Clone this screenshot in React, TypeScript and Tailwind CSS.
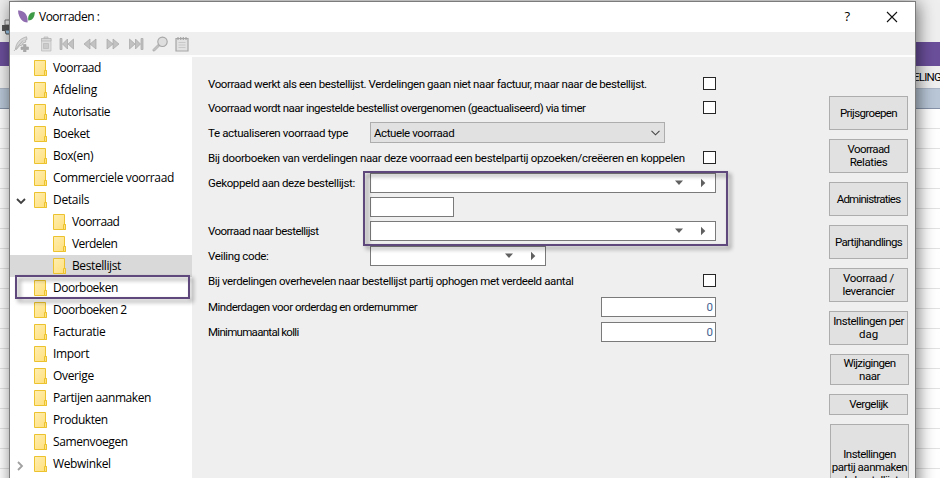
import React from "react";

const ui = "font-['Roboto','Liberation_Sans',sans-serif]";

type Node = { label: string; track: string; sub?: boolean; selected?: boolean; arrow?: "open" | "closed" };

const tree: Node[] = [
  { label: "Voorraad", track: "tracking-[-0.55px]" },
  { label: "Afdeling", track: "tracking-[-0.2px]" },
  { label: "Autorisatie", track: "tracking-[-0.32px]" },
  { label: "Boeket", track: "tracking-[-0.4px]" },
  { label: "Box(en)", track: "tracking-[-0.3px]" },
  { label: "Commerciele voorraad", track: "tracking-[-0.35px]" },
  { label: "Details", track: "tracking-[-0.3px]", arrow: "open" },
  { label: "Voorraad", track: "tracking-[-0.6px]", sub: true },
  { label: "Verdelen", track: "tracking-[-0.6px]", sub: true },
  { label: "Bestellijst", track: "tracking-[-0.4px]", sub: true, selected: true },
  { label: "Doorboeken", track: "tracking-[-0.5px]" },
  { label: "Doorboeken 2", track: "tracking-[-0.5px]" },
  { label: "Facturatie", track: "tracking-[-0.35px]" },
  { label: "Import", track: "tracking-[-0.35px]" },
  { label: "Overige", track: "tracking-[-0.35px]" },
  { label: "Partijen aanmaken", track: "tracking-[-0.43px]" },
  { label: "Produkten", track: "tracking-[-0.45px]" },
  { label: "Samenvoegen", track: "tracking-[-0.38px]" },
  { label: "Webwinkel", track: "tracking-[-0.35px]", arrow: "closed" },
];

function Folder() {
  return (
    <svg width="14" height="16" viewBox="0 0 14 16" className="shrink-0">
      <defs>
        <linearGradient id="fold" x1="0" y1="0" x2="1" y2="1">
          <stop offset="0" stopColor="#ffeeb0" />
          <stop offset="1" stopColor="#ffdf7c" />
        </linearGradient>
      </defs>
      <path d="M.5.5h11v10h1v5H.5z" fill="url(#fold)" stroke="#ecc32e" />
      <path d="M10.500 15v-4.500h2v5h-2z" fill="#ffe284" stroke="#ecc32e" />
    </svg>
  );
}

function TreeRow({ n }: { n: Node }) {
  return (
    <div className={`flex h-[22px] shrink-0 items-center ${n.selected ? "bg-[#d9d9d9]" : ""}`}>
      <span className={`flex shrink-0 items-center pl-[6px] pt-[3px] ${n.sub ? "w-[43px]" : "w-[24px]"}`}>
        {n.arrow === "open" && (
          <svg width="10" height="7" viewBox="0 0 10 7"><path d="M1 1l4 4 4-4" fill="none" stroke="#404040" strokeWidth="1.8" /></svg>
        )}
        {n.arrow === "closed" && (
          <svg width="8" height="10" viewBox="0 0 8 10"><path d="M2 1l4 4-4 4" fill="none" stroke="#a0a0a0" strokeWidth="1.800" /></svg>
        )}
      </span>
      <Folder />
      <span className={`ml-[5px] whitespace-nowrap font-['Open_Sans','Noto_Sans',sans-serif] text-[12px] leading-[22px] text-black ${n.track}`}>{n.label}</span>
    </div>
  );
}

function Tool({ children, gap }: { children: React.ReactNode; gap: string }) {
  return (
    <svg width="16" height="16" viewBox="0 0 16 16" className={`shrink-0 ${gap}`} fill="#c2c2c2" stroke="#a6a6a6" strokeWidth=".7">
      {children}
    </svg>
  );
}

function Toolbar() {
  return (
    <div className="flex h-[23px] items-center bg-[#efefef] pl-[3px]">
      <Tool gap="">
        <path d="M2.500 13C3 7 7 2.500 13.500.8l.5 2.700-2 1 1 1.500-3 1-.5 2-3 .8-3 3.700z" fill="#d6d6d6" />
        <path d="M1 15l9-10.500" fill="none" />
        <path d="M10.500 8.500h2.500v2.500h2.500v2.500H13V16h-2.500v-2.500H8V11h2.500z" fill="#a8a8a8" />
      </Tool>
      <Tool gap="ml-[9px]">
        <path d="M3.500 2.500h9.500V15H3.500z" fill="#dedede" stroke="#bababa" />
        <path d="M3.500 2.500h9.500V5H3.500zM6 1h4v1.500H6z" fill="#d8d8d8" stroke="#b4b4b4" />
        <path d="M5.500 7.500h5v5h-5z" fill="#cacaca" stroke="#b8b8b8" />
      </Tool>
      <Tool gap="ml-[5px]"><path d="M1 2.500h2v11H1zM8.500 3v10L3.500 8zM14.500 3v10L9 8z" /></Tool>
      <Tool gap="ml-[7px]"><path d="M8 3v10L2 8zM14 3v10L8 8z" /></Tool>
      <Tool gap="ml-[7px]"><path d="M2 3v10l6-5zM8 3v10l6-5z" /></Tool>
      <Tool gap="ml-[7px]"><path d="M13 2.500h2v11h-2zM1.500 3v10l5.500-5zM7.500 3v10l5-5z" /></Tool>
      <Tool gap="ml-[8px]">
        <path d="M1 13.500l5-5 1.500 1.500-5 5-1.500 0z" />
        <circle cx="10.500" cy="5.800" r="4.700" fill="#dedede" strokeWidth="1.100" />
      </Tool>
      <Tool gap="ml-[6px]">
        <path d="M2 2.500h12v12.500H2z" fill="#e2e2e2" strokeWidth="1.200" />
        <path d="M4 1v3M6.700 1v3M9.300 1v3M12 1v3" fill="none" strokeWidth="1.200" />
        <path d="M4.500 6.500h7M4.500 9h7M4.500 11.500h7" fill="none" stroke="#bdbdbd" />
      </Tool>
    </div>
  );
}

function Check() {
  return <span className="-mt-px h-[13px] w-[13px] shrink-0 border border-[#262626] bg-white" />;
}

function Combo({ w }: { w: string }) {
  return (
    <div className={`flex h-[20px] items-center justify-end border border-[#7a7a7a] bg-white ${w}`}>
      <svg width="10" height="6" viewBox="0 0 10 6"><path d="M1 .5h8L5 5z" fill="#606060" /></svg>
      <svg width="6" height="10" viewBox="0 0 6 10" className="ml-[16px] mr-[9px]"><path d="M1 .8L5.300 5 1 9.200z" fill="#606060" /></svg>
    </div>
  );
}

function Row({ label, h, track = "", children }: { label: string; h: string; track?: string; children?: React.ReactNode }) {
  return (
    <div className={`flex shrink-0 items-center ${h}`}>
      <span className={`w-[162px] shrink-0 whitespace-nowrap ${track}`}>{label}</span>
      {children}
    </div>
  );
}

function WideRow({ label, h, track, children }: { label: string; h: string; track: string; children: React.ReactNode }) {
  return (
    <div className={`flex w-[508px] shrink-0 items-center justify-between ${h}`}>
      <span className={`whitespace-nowrap ${track}`}>{label}</span>
      {children}
    </div>
  );
}

function Num() {
  return <span className="flex h-[20px] w-[115px] items-center justify-end border border-[#7a7a7a] bg-white pr-[2px] text-[#44618f]">0</span>;
}

function Btn({ lines, h, cls = "" }: { lines: [string, string][]; h: string; cls?: string }) {
  return (
    <div className={`mb-[9px] flex w-[79px] shrink-0 flex-col items-center justify-center whitespace-nowrap border border-[#adadad] bg-[#e1e1e1] leading-[13px] ${h} ${cls}`}>
      {lines.map(([text, track]) => <span key={text} className={track}>{text}</span>)}
    </div>
  );
}

function Frame({ box }: { box: string }) {
  return <div className={`pointer-events-none absolute border-2 border-[#5f487c] drop-shadow-[3px_3px_2px_rgba(0,0,0,0.45)] ${box}`} />;
}

function Backdrop() {
  const rows = Array.from({ length: 19 });
  return (
    <div className="absolute inset-0 flex flex-col bg-white">
      <div className="h-[42px] shrink-0 bg-[#efefef]" />
      <div className="h-[24px] shrink-0 bg-[#6b4f9b]" />
      <div className="flex h-[23px] shrink-0 items-center justify-end border-b border-[#a9b4c4] bg-[#f0f0f0] pt-[2px]">
        <span className={`-mr-px whitespace-nowrap text-[11.5px] tracking-[-0.8px] ${ui}`}>ELING</span>
      </div>
      <div className="h-[20px] shrink-0 border-b border-[#8592a8] bg-[#b9c7d7]" />
      {rows.map((_, i) => <div key={i} className="h-[20px] shrink-0 border-b border-[#e2e2e2]" />)}
    </div>
  );
}

export default function App() {
  return (
    <div className="relative h-[478px] w-[940px] overflow-hidden">
      <Backdrop />
      <svg width="10" height="16" viewBox="0 0 10 16" className="absolute left-[2px] top-[19px]">
        <path d="M3 1h7v5H3z" fill="#eee" stroke="#777" />
        <path d="M0 6h10v6H0z" fill="#555" />
        <path d="M3 11h7v4H4z" fill="#9cc8ea" stroke="#555" />
      </svg>
      <div className="absolute left-[9px] top-px flex h-[500px] w-[907px] flex-col border border-[#7c7c7c] bg-[#efefef] shadow-[2px_2px_16px_rgba(0,0,0,0.55)]">
        <div className="flex h-[30px] shrink-0 items-center bg-white">
          <svg width="17" height="13" viewBox="0 0 17 13" className="mb-[2px] ml-[8px]">
            <path d="M0 .5C5-.2 10.500 4 9.500 12.500 4.500 12.500.5 8 0 .5z" fill="#8f6cb0" />
            <path d="M16.800 2c-4.500 0-7.300 3-6.500 8.500 4 0 6.500-3.500 6.500-8.500z" fill="#3f9a48" />
          </svg>
          <span className="ml-[4px] font-['Open_Sans','Noto_Sans',sans-serif] text-[12px] tracking-[-0.5px] text-black">Voorraden :</span>
          <span className="ml-auto font-['Open_Sans',sans-serif] text-[13px] font-medium">?</span>
          <svg width="12" height="12" viewBox="0 0 12 12" className="ml-[36px] mr-[17px]"><path d="M1 1l10 10M11 1L1 11" stroke="#111" strokeWidth="1.100" /></svg>
        </div>
        <Toolbar />
        <div className="h-[2px] shrink-0 bg-[#fdfdfd]" />
        <div className="flex min-h-0 flex-1">
          <div className="flex w-[182px] shrink-0 flex-col bg-white">
            {tree.map((n, i) => <TreeRow key={i} n={n} />)}
          </div>
          <div className={`flex flex-1 pl-[16px] text-[11.5px] leading-[14px] text-black ${ui}`}>
            <div className="flex w-[621px] shrink-0 flex-col pt-[15px]">
              <WideRow h="h-[24px]" track="tracking-[-0.4px]" label="Voorraad werkt als een bestellijst. Verdelingen gaan niet naar factuur, maar naar de bestellijst."><Check /></WideRow>
              <WideRow h="h-[24px]" track="tracking-[-0.47px]" label="Voorraad wordt naar ingestelde bestellist overgenomen (geactualiseerd) via timer"><Check /></WideRow>
              <Row h="h-[25px]" track="tracking-[-0.36px]" label="Te actualiseren voorraad type">
                <div className="flex h-[21px] w-[295px] items-center justify-between border border-[#adadad] bg-[#e1e1e1] pl-[3px] pr-[4px]">
                  <span className="tracking-[-0.4px]">Actuele voorraad</span>
                  <svg width="9" height="6" viewBox="0 0 9 6"><path d="M.5.8l4 4 4-4" fill="none" stroke="#444" strokeWidth="1.100" /></svg>
                </div>
              </Row>
              <WideRow h="h-[26px]" track="tracking-[-0.32px]" label="Bij doorboeken van verdelingen naar deze voorraad een bestelpartij opzoeken/creëeren en koppelen"><Check /></WideRow>
              <Row h="h-[24px]" track="tracking-[-0.37px]" label="Gekoppeld aan deze bestellijst:"><Combo w="w-[346px]" /></Row>
              <Row h="h-[24px]" label=""><span className="h-[20px] w-[84px] border border-[#7a7a7a] bg-white" /></Row>
              <Row h="h-[24px]" track="tracking-[-0.56px]" label="Voorraad naar bestellijst"><Combo w="w-[346px]" /></Row>
              <Row h="h-[25px]" track="tracking-[-0.36px]" label="Veiling code:"><Combo w="w-[176px]" /></Row>
              <WideRow h="h-[26px]" track="tracking-[-0.39px]" label="Bij verdelingen overhevelen naar bestellijst partij ophogen met verdeeld aantal"><Check /></WideRow>
              <WideRow h="h-[25px]" track="tracking-[-0.5px]" label="Minderdagen voor orderdag en ordernummer"><Num /></WideRow>
              <WideRow h="h-[26px]" track="tracking-[-0.7px]" label="Minimumaantal kolli"><Num /></WideRow>
            </div>
            <div className="flex flex-col pt-[39px]">
              <Btn h="h-[34px]" lines={[["Prijsgroepen", "tracking-[-0.6px]"]]} />
              <Btn h="h-[34px]" lines={[["Voorraad", "tracking-[-0.6px]"], ["Relaties", "tracking-[-0.4px]"]]} />
              <Btn h="h-[34px]" lines={[["Administraties", "tracking-[-0.75px]"]]} />
              <Btn h="h-[34px]" lines={[["Partijhandlings", "tracking-[-0.63px]"]]} />
              <Btn h="h-[34px]" lines={[["Voorraad /", "tracking-[-0.35px]"], ["leverancier", "tracking-[-0.3px]"]]} />
              <Btn h="h-[34px]" lines={[["Instellingen per", "tracking-[-0.47px]"], ["dag", ""]]} />
              <Btn h="h-[31px]" cls="ml-px" lines={[["Wijzigingen", "tracking-[-0.6px]"], ["naar", "tracking-[-0.5px]"]]} />
              <Btn h="h-[21px]" lines={[["Vergelijk", "tracking-[-0.55px]"]]} />
              <Btn h="h-[87px]" cls="ml-px" lines={[["Instellingen", "tracking-[-0.54px]"], ["partij aanmaken", "tracking-[-0.47px]"], ["de bestellijst", "tracking-[-0.5px]"]]} />
            </div>
          </div>
        </div>
      </div>
      <Frame box="left-[15px] top-[275px] h-[24px] w-[175px]" />
      <Frame box="left-[363px] top-[171px] h-[75px] w-[365px]" />
    </div>
  );
}
